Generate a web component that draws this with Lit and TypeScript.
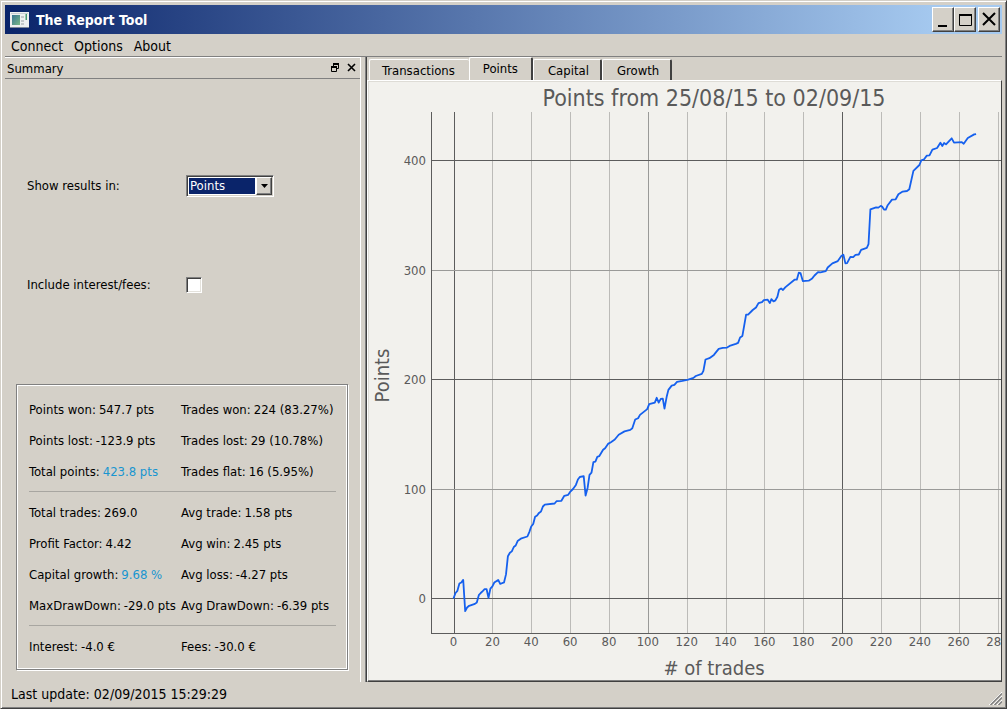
import { LitElement, html, svg, css } from "lit";
import { customElement, state } from "lit/decorators.js";
import { classMap } from "lit/directives/class-map.js";

type Point = [number, number];

// Cumulative points after each trade: [trade number, points].
const SERIES: Point[] = [
  [0, 0], [1, 5], [2, 7], [3, 13.7], [4, 14.6], [5, 17], [6, -11.6], [7, -8.2], [8, -6.7], [11, -5],
  [12, -3.7], [13, 3], [14, 5], [15, 6.7], [16, 8.5], [17, 8.5], [18, 0.6], [19, 9], [20, 11], [21, 14.6],
  [23, 17], [24, 13.4], [25, 14], [26, 14.6], [27, 22], [28, 38.6], [29, 41.7], [30, 43], [31, 47],
  [32, 48.4], [33, 52.4], [35, 55], [38, 56.6], [39, 60.6], [40, 65.8], [41, 68], [42, 74.6], [43, 75.8],
  [44, 78.2], [45, 79.5], [46, 84], [47, 85.8], [52, 86.8], [53, 88.9], [55.5, 89.2], [57, 93.8],
  [59, 94.7], [60, 97.4], [61.5, 100], [63, 103.8], [64, 108.7], [65, 111], [67, 111.7], [68, 94],
  [69, 101], [70, 113], [71, 115], [72, 124.5], [73, 125], [74, 129.4], [75, 130], [77, 135.8],
  [78, 137.3], [79.5, 141.2], [81, 142.8], [83, 145.2], [85, 149.5], [88, 152.6], [91, 154], [92, 155.5],
  [93.5, 163.5], [95, 164.7], [96, 167.7], [99.7, 173], [100.7, 177.5], [103.6, 179], [104.6, 183.3],
  [105.6, 179], [106.7, 182.3], [107.7, 182.6], [108.6, 173.5], [109.8, 184.8], [110.6, 190.6],
  [112.3, 194.5], [113.7, 195.1], [115, 197.9], [117.8, 198.8], [120.8, 200], [123.5, 201.5],
  [124.7, 203.3], [127.8, 205.2], [128.6, 207.9], [129.7, 218.3], [131.7, 219.5], [134, 222.5],
  [136.5, 228], [138.6, 228.9], [140.8, 229.2], [142.5, 231], [145.3, 232.6], [146.5, 233.5],
  [147.5, 238.4], [148.7, 239.9], [150.6, 259.4], [151.6, 259.4], [154, 263.6], [155.7, 265.8],
  [157, 269.9], [158.8, 270.8], [159.7, 272.6], [161.7, 273], [162.8, 269.9], [163.6, 273.5],
  [164.7, 271.4], [165.7, 272.3], [166.7, 275.7], [167.6, 282], [168.6, 283.3], [169.6, 281.8],
  [170.7, 284.2], [175.5, 291.2], [176.7, 291.2], [177.7, 297.6], [178.6, 297.3], [179.8, 290],
  [182.8, 290.3], [184.6, 292.4], [185.8, 295.1], [187.6, 298.2], [188.9, 297.9], [191.6, 299.1],
  [192.6, 302.4], [195, 306.1], [197.8, 308.2], [199.7, 313.1], [200.7, 314], [201.7, 306.1],
  [202.6, 306.4], [204.3, 312.2], [205.7, 311.9], [206.9, 314], [208.6, 314.3], [209.8, 318.5],
  [212.7, 320.4], [213.6, 323.7], [214.6, 355.6], [217.5, 357.4], [218.7, 357.1], [219.9, 358.7],
  [220.6, 358], [221.6, 355.3], [222.5, 355.3], [223.5, 359.3], [225.7, 364.4], [227.6, 364.7],
  [229, 369.3], [231.2, 371.7], [233.4, 372.3], [234.6, 373.9], [236.7, 390.6], [239.8, 396],
  [240.8, 400.3], [242.2, 401.2], [243.6, 404.6], [245, 404.9], [246.5, 410], [248.9, 411.6],
  [250.6, 416.4], [251.6, 413.4], [252.5, 416.1], [253.5, 414.9], [256.4, 420.4], [257.6, 416.4],
  [261.6, 417], [262.6, 415.5], [264.7, 420.7], [268, 424], [269, 424.3],
];

const X_MIN = -11.6;
const X_MAX = 281.8;
const Y_MIN = -32;
const Y_MAX = 444;

@customElement("points-chart")
export class PointsChart extends LitElement {
  static styles = css`
    :host {
      display: block;
      overflow: hidden;
      min-width: 0;
      min-height: 0;
      contain: size;
    }
    .plot {
      display: block;
      width: 100%;
      height: 100%;
    }
    text {
      fill: #5a5a5a;
      text-anchor: middle;
      font-size: 13px;
    }
    .tick-y {
      text-anchor: end;
    }
    .title {
      font-size: 23px;
    }
    .axis-title {
      font-size: 20px;
    }
    .grid {
      stroke: #bcbbb8;
      shape-rendering: crispEdges;
    }
    .mid {
      stroke: #9a9a98;
    }
    .strong {
      stroke: #5c5c5c;
    }
    .series {
      fill: none;
      stroke: #1560ee;
      stroke-width: 1.8px;
      stroke-linejoin: round;
    }
  `;

  @state() private width = 632;
  @state() private height = 600;
  private observer?: ResizeObserver;

  connectedCallback() {
    super.connectedCallback();
    this.observer = new ResizeObserver(() => this.measure());
    this.observer.observe(this);
  }

  disconnectedCallback() {
    this.observer?.disconnect();
    super.disconnectedCallback();
  }

  private measure() {
    this.width = this.clientWidth;
    this.height = this.clientHeight;
  }

  render() {
    const left = 63;
    const top = 31;
    const right = this.width;
    const bottom = this.height - 48;
    const x = (v: number) => left + ((v - X_MIN) / (X_MAX - X_MIN)) * (right - left);
    const y = (v: number) => bottom - ((v - Y_MIN) / (Y_MAX - Y_MIN)) * (bottom - top);
    const snap = (v: number) => Math.round(v) + 0.5;
    const xs = Array.from({ length: 15 }, (_, i) => i * 20);
    const ys = [0, 100, 200, 300, 400];
    const line = (x1: number, y1: number, x2: number, y2: number, weight: string) =>
      svg`<line class="grid ${weight}" x1=${x1} y1=${y1} x2=${x2} y2=${y2}></line>`;
    const path = SERIES.map(([t, p]) => `${x(t).toFixed(1)},${(y(p) + 0.5).toFixed(1)}`).join(" ");
    const middle = (left + right) / 2 - 2;
    return html`
      <svg class="plot" role="img" aria-label="Points per number of trades">
        ${xs.map((v) => line(snap(x(v)), top, snap(x(v)), bottom, v % 200 === 0 ? "strong" : v % 100 === 0 ? "mid" : ""))}
        ${ys.map((v) => line(left, snap(y(v)), right, snap(y(v)), v % 200 === 0 ? "strong" : "mid"))}
        ${line(left + 0.5, top, left + 0.5, bottom, "strong")}
        ${line(left, bottom + 0.5, right, bottom + 0.5, "strong")}
        <polyline class="series" points=${path}></polyline>
        ${xs.map((v) => svg`<text x=${x(v)} y=${bottom + 13}>${v}</text>`)}
        ${ys.map((v) => svg`<text class="tick-y" x=${left - 5} y=${y(v) + 5}>${v}</text>`)}
        <text class="title" x=${middle} y="25">Points from 25/08/15 to 02/09/15</text>
        <text class="axis-title" x=${middle} y=${this.height - 6}># of trades</text>
        <text class="axis-title" transform="translate(21 ${(top + bottom) / 2 + 3}) rotate(-90)">Points</text>
      </svg>
    `;
  }
}

interface Stat {
  label: string;
  value: string;
  accent?: boolean;
}

const GROUPS: Stat[][] = [
  [
    { label: "Points won", value: "547.7 pts" },
    { label: "Trades won", value: "224 (83.27%)" },
    { label: "Points lost", value: "-123.9 pts" },
    { label: "Trades lost", value: "29 (10.78%)" },
    { label: "Total points", value: "423.8 pts", accent: true },
    { label: "Trades flat", value: "16 (5.95%)" },
  ],
  [
    { label: "Total trades", value: "269.0" },
    { label: "Avg trade", value: "1.58 pts" },
    { label: "Profit Factor", value: "4.42" },
    { label: "Avg win", value: "2.45 pts" },
    { label: "Capital growth", value: "9.68 %", accent: true },
    { label: "Avg loss", value: "-4.27 pts" },
    { label: "MaxDrawDown", value: "-29.0 pts" },
    { label: "Avg DrawDown", value: "-6.39 pts" },
  ],
  [
    { label: "Interest", value: "-4.0 €" },
    { label: "Fees", value: "-30.0 €" },
  ],
];

const TABS = ["Transactions", "Points", "Capital", "Growth"];

@customElement("app-root")
export class AppRoot extends LitElement {
  static styles = css`
    :host {
      display: block;
      color: #000;
      font: 13px/16px "DejaVu Sans Condensed", "DejaVu Sans", sans-serif;
    }
    *,
    *::before {
      box-sizing: border-box;
    }
    button,
    select,
    input {
      margin: 0;
      padding: 0;
      font: inherit;
      color: inherit;
      border-radius: 0;
      appearance: none;
    }
    .window {
      display: flex;
      flex-direction: column;
      height: 100vh;
      padding: 3px;
      background: #d4d0c8;
      border: 1px solid #d4d0c8;
      border-right-color: #404040;
      border-bottom-color: #404040;
      box-shadow: inset 1px 1px #fff, inset -1px -1px #808080;
    }
    .titlebar {
      display: flex;
      align-items: center;
      height: 29px;
      margin: 1px 1px 0;
      padding: 0 2px 0 5px;
      background: linear-gradient(90deg, #0a246a, #a6caf0 94%);
      color: #fff;
    }
    .app-icon {
      margin-right: 7px;
    }
    .caption {
      flex: 1;
      margin: 0;
      font-size: 14px;
      line-height: 20px;
      font-weight: bold;
    }
    .win-button {
      display: grid;
      place-items: center;
      width: 22px;
      height: 25px;
      background: #d4d0c8;
      color: #000;
      border: 1px solid;
      border-color: #fff #404040 #404040 #fff;
      box-shadow: inset -1px -1px #808080;
    }
    .close {
      margin-left: 2px;
    }
    .menubar {
      display: flex;
      gap: 11px;
      height: 23px;
      margin: 0 1px;
      padding: 2px 6px 0;
      border-bottom: 1px solid #808080;
    }
    .menu {
      background: none;
      border: 0;
      font-size: 14px;
      line-height: 20px;
    }
    .body {
      flex: 1;
      display: flex;
      min-height: 0;
      margin: 0 1px;
    }
    .dock {
      display: flex;
      flex-direction: column;
      flex: 0 0 356px;
      border-top: 1px solid #fff;
      border-right: 1px solid #fff;
    }
    .dock-title {
      display: flex;
      align-items: center;
      gap: 6px;
      height: 21px;
      padding: 1px 4px 0 2px;
      border-bottom: 1px solid #808080;
    }
    .dock-name {
      flex: 1;
      margin: 0;
      font-size: 13px;
      line-height: 20px;
      font-weight: normal;
    }
    .dock-button {
      display: grid;
      width: 10px;
      height: 16px;
      place-items: start center;
      padding-top: 2px;
      background: none;
      border: 0;
    }
    .options {
      flex: 1;
      display: grid;
      grid-template-columns: 159px 1fr;
      grid-auto-rows: 1fr;
      align-items: center;
      justify-items: start;
      padding: 57px 22px 50px;
    }
    .combo {
      display: flex;
      width: 88px;
      height: 22px;
      padding: 1px;
      background: #fff;
      border: 1px solid;
      border-color: #808080 #fff #fff #808080;
      box-shadow: inset 1px 1px #404040, inset -1px -1px #d4d0c8;
    }
    .combo-select {
      flex: 1;
      min-width: 0;
      height: 16px;
      margin: 1px;
      padding-left: 1px;
      line-height: 16px;
      background: #0a246a;
      color: #fff;
      border: 0;
      outline: 0;
    }
    .combo-arrow {
      display: grid;
      place-items: center;
      width: 16px;
      background: #d4d0c8;
      border: 1px solid;
      border-color: #fff #404040 #404040 #fff;
      box-shadow: inset -1px -1px #808080;
      pointer-events: none;
    }
    .check {
      width: 16px;
      height: 16px;
      background: #fff;
      border: 1px solid;
      border-color: #808080 #fff #fff #808080;
      box-shadow: inset 1px 1px #404040, inset -1px -1px #e4e2dc;
    }
    .check:checked {
      background: #0a246a;
      background-clip: content-box;
      padding: 3px;
    }
    .stats {
      margin: 0 12px 12px 11px;
      padding: 9px 11px 7px 12px;
      border: 1px solid #808080;
      outline: 1px solid #fff;
      outline-offset: -2px;
      box-shadow: 1px 1px #fff;
    }
    .stat-group {
      display: grid;
      grid-template-columns: 152px 1fr;
      grid-auto-rows: 31px;
      align-items: center;
      margin: 0;
      white-space: nowrap;
    }
    .stat-group + .stat-group {
      margin-top: 4px;
      padding-top: 5px;
      border-top: 1px solid #a8a6a1;
    }
    .stat {
      display: flex;
      gap: 3px;
    }
    .value {
      margin: 0;
    }
    .accent {
      color: #1895d0;
    }
    .content {
      flex: 1;
      display: flex;
      flex-direction: column;
      min-width: 0;
      margin-left: 4px;
      border-left: 1px solid #808080;
      box-shadow: inset 1px 0 #404040;
    }
    .tabs {
      display: flex;
      align-items: flex-end;
      height: 23px;
      padding-left: 3px;
    }
    .tab {
      height: 21px;
      padding: 0 11px 0 14px;
      background: #d4d0c8;
      border: solid;
      border-width: 1px 2px 0 1px;
      border-color: #fff #404040 #fff #fff;
      border-radius: 2px 2px 0 0;
      line-height: 22px;
    }
    .tab:first-child {
      padding: 0 14px 0 12px;
      border-right-width: 0;
    }
    .tab.active {
      height: 24px;
      margin-bottom: -1px;
      padding: 0 13px 1px;
    }
    .panel {
      flex: 1;
      display: grid;
      min-height: 0;
      margin-left: 1px;
      background: #f2f1ed;
      border: 1px solid;
      border-color: #fff #404040 #404040 #fff;
      box-shadow: inset 0 -1px #808080, inset 1px 1px #dedcd6;
    }
    .statusbar {
      display: flex;
      align-items: center;
      justify-content: space-between;
      height: 23px;
      padding: 0 1px 0 7px;
      font-size: 14px;
      line-height: 20px;
    }
    .grip {
      align-self: flex-end;
    }
  `;

  @state() private tab = "Points";

  render() {
    return html`
      <div class="window">
        <header class="titlebar">
          <svg class="app-icon" width="19" height="16" viewBox="0 0 19 16" aria-hidden="true">
            <defs>
              <linearGradient id="pane" x1="0" y1="0" x2="1" y2="1">
                <stop offset="0" stop-color="#3a7694"></stop>
                <stop offset="1" stop-color="#78b886"></stop>
              </linearGradient>
            </defs>
            <rect width="19" height="15" fill="#eef0f0"></rect>
            <rect x="1" y="1" width="17" height="1" fill="#c9ced2"></rect>
            <rect x="2" y="3" width="8" height="10" fill="url(#pane)"></rect>
            <path d="M11 4h3v2h-3zM11 8h3v2h-3zM11 11h3v2h-3z" fill="#c4c8ca"></path>
            <path d="M15.500 2h1.500v6h-1.500z" fill="#4a9a72"></path>
            <path d="M0 15.500h19" stroke="#7d8798"></path>
          </svg>
          <h1 class="caption">The Report Tool</h1>
          <button class="win-button" aria-label="Minimize">
            <svg width="16" height="16"><path d="M3 14h9" stroke="#000" stroke-width="2"></path></svg>
          </button>
          <button class="win-button" aria-label="Maximize">
            <svg width="16" height="16"><path d="M2 3h13" stroke="#000" stroke-width="2"></path><path d="M2.500 3v10.500h12V3" fill="none" stroke="#000"></path></svg>
          </button>
          <button class="win-button close" aria-label="Close">
            <svg width="16" height="16"><path d="M2 1l12 12M14 1L2 13" stroke="#000" stroke-width="2"></path></svg>
          </button>
        </header>

        <nav class="menubar">
          ${["Connect", "Options", "About"].map((m) => html`<button class="menu">${m}</button>`)}
        </nav>

        <main class="body">
          <section class="dock">
            <div class="dock-title">
              <h2 class="dock-name">Summary</h2>
              <button class="dock-button" aria-label="Float">
                <svg width="9" height="9"><path d="M2 1h6M0 4h6" stroke="#000" stroke-width="2"></path><path d="M2.500 1v3M7.500 1v4.500H6M.5 4v4.500h5V4" fill="none" stroke="#000"></path></svg>
              </button>
              <button class="dock-button" aria-label="Close summary">
                <svg width="9" height="9"><path d="M1 1l7 7M8 1L1 8" stroke="#000" stroke-width="1.600"></path></svg>
              </button>
            </div>

            <form class="options">
              <label for="unit">Show results in:</label>
              <div class="combo">
                <select id="unit" class="combo-select">
                  <option>Points</option>
                </select>
                <span class="combo-arrow"><svg width="7" height="4"><path d="M0 0h7L3.500 4z"></path></svg></span>
              </div>
              <label for="fees">Include interest/fees:</label>
              <input id="fees" class="check" type="checkbox" />
            </form>

            <div class="stats">
              ${GROUPS.map(
                (group) => html`<dl class="stat-group">
                  ${group.map(
                    (s) => html`<div class="stat">
                      <dt>${s.label}:</dt>
                      <dd class=${classMap({ value: true, accent: !!s.accent })}>${s.value}</dd>
                    </div>`
                  )}
                </dl>`
              )}
            </div>
          </section>

          <section class="content">
            <div class="tabs" role="tablist">
              ${TABS.map(
                (t) => html`<button
                  class=${classMap({ tab: true, active: t === this.tab })}
                  role="tab"
                  aria-selected=${t === this.tab}
                  @click=${() => (this.tab = t)}
                >${t}</button>`
              )}
            </div>
            <div class="panel" role="tabpanel">
              <points-chart></points-chart>
            </div>
          </section>
        </main>

        <footer class="statusbar">
          <span>Last update: 02/09/2015 15:29:29</span>
          <svg class="grip" width="13" height="13" aria-hidden="true">
            <path d="M0 13L13 0M4 13l9-9M8 13l5-5" stroke="#fff"></path>
            <path d="M1.500 13L13 1.500M5.500 13L13 5.500M9.500 13L13 9.500" stroke="#808080" stroke-width="1.500"></path>
          </svg>
        </footer>
      </div>
    `;
  }
}
